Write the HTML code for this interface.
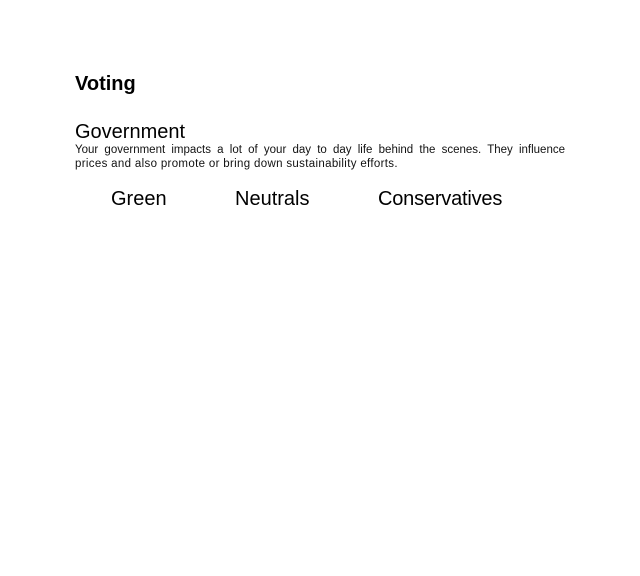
<!DOCTYPE html>
<html><head><style>
body{margin:0;width:640px;height:576px;background:#fff;font-family:"Liberation Sans",sans-serif;color:#000;position:relative;}
.a{position:absolute;white-space:nowrap;}
</style></head><body>
<div class="a" style="left:75px;top:72px;font-size:20px;font-weight:bold;line-height:24px;">Voting</div>
<div class="a" style="left:75px;top:120px;font-size:20px;line-height:24px;">Government</div>
<div style="position:absolute;left:75px;top:143px;width:490px;font-size:11.5px;line-height:14px;text-align:justify;text-align-last:justify;color:#111;white-space:nowrap;">Your government impacts a lot of your day to day life behind the scenes. They influence</div>
<div class="a" style="left:75px;top:157px;font-size:11.5px;line-height:14px;color:#111;letter-spacing:0.33px;">prices and also promote or bring down sustainability efforts.</div>
<div class="a" style="left:111px;top:187px;font-size:20px;line-height:24px;">Green</div>
<div class="a" style="left:235px;top:187px;font-size:20px;line-height:24px;">Neutrals</div>
<div class="a" style="left:378px;top:187px;font-size:20px;line-height:24px;letter-spacing:-0.2px;">Conservatives</div>
</body></html>
